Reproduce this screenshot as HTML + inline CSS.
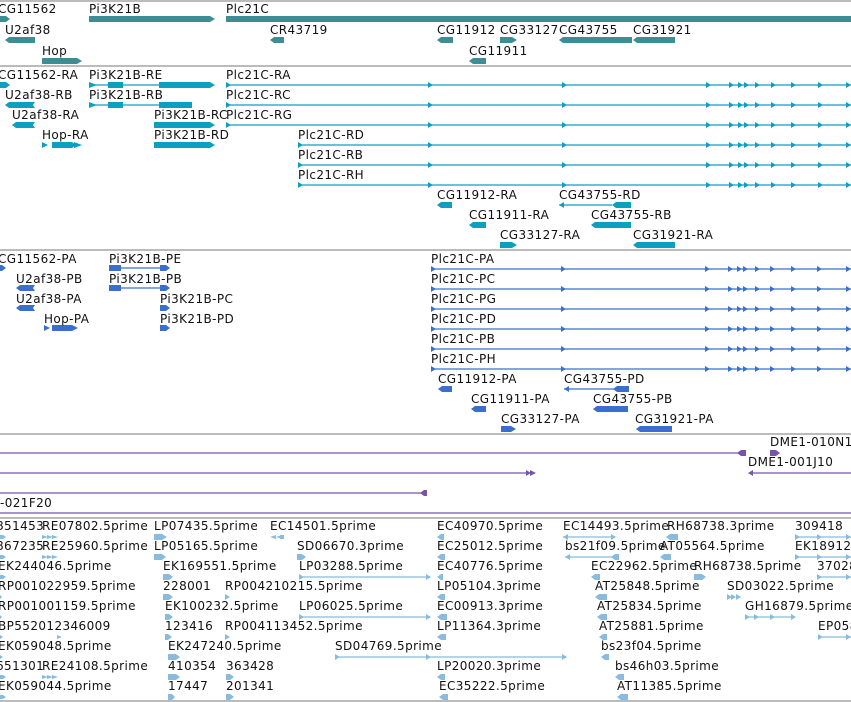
<!DOCTYPE html>
<html><head><meta charset="utf-8"><style>
html,body{margin:0;padding:0;background:#fff;width:851px;height:702px;overflow:hidden}
svg{display:block}
text{font-family:"DejaVu Sans","Liberation Sans",sans-serif;font-size:12px;letter-spacing:0.4px;fill:#111}
</style></head><body>
<svg width="851" height="702" viewBox="0 0 851 702" xmlns="http://www.w3.org/2000/svg">
<g stroke="#bbb" stroke-width="2">
<line x1="0" y1="1" x2="851" y2="1"/><line x1="0" y1="66" x2="851" y2="66"/>
<line x1="0" y1="250" x2="851" y2="250"/><line x1="0" y1="434" x2="851" y2="434"/>
<line x1="0" y1="518" x2="851" y2="518"/><line x1="0" y1="701" x2="851" y2="701"/>
</g>
<!-- Track 1 -->
<g fill="#3d8e94">
<polygon points="0,16 6,16 10,19 6,22 0,22"/>
<polygon points="89,16 210,16 215,19 210,22 89,22"/>
<rect x="226" y="16" width="625" height="6"/>
<polygon points="9,37 35,37 35,43 9,43 5,40"/>
<polygon points="42,58 77,58 82,61 77,64 42,64"/>
<polygon points="274,37 284,37 284,43 274,43 270,40"/>
<polygon points="441,37 453,37 453,43 441,43 437,40"/>
<polygon points="500,37 512,37 517,40 512,43 500,43"/>
<polygon points="563,37 632,37 632,43 563,43 559,40"/>
<polygon points="637,37 675,37 675,43 637,43 633,40"/>
<polygon points="473,58 486,58 486,64 473,64 469,61"/>
</g>
<text x="-2" y="13">CG11562</text><text x="89" y="13">Pi3K21B</text><text x="226" y="13">Plc21C</text>
<text x="5" y="34">U2af38</text><text x="270" y="34">CR43719</text><text x="437" y="34">CG11912</text>
<text x="500" y="34">CG33127</text><text x="559" y="34">CG43755</text><text x="633" y="34">CG31921</text>
<text x="42" y="55">Hop</text><text x="469" y="55">CG11911</text>
<!-- Track 2 -->
<g fill="#0aa0c0" stroke="none">
<polygon points="0,82 6,82 10,85 6,88 0,88"/>
<polygon points="9,102 35,102 33,105 35,108 9,108 5,105"/>
<polygon points="16,122 35,122 33,125 35,128 16,128 12,125"/>
<polygon points="42,142 48,145 42,148"/><rect x="52" y="142" width="20" height="6"/><polygon points="72,142 76,145 72,148"/><polygon points="74,142 82,145 74,148"/>
<polygon points="89,82 97,85 89,88"/><rect x="108" y="82" width="15" height="6"/><rect x="159" y="82" width="51" height="6"/><polygon points="210,82 215,85 210,88"/>
<polygon points="89,102 97,105 89,108"/><rect x="108" y="102" width="15" height="6"/><rect x="159" y="102" width="33" height="6"/>
<rect x="154" y="122" width="56" height="6"/><polygon points="210,122 215,125 210,128"/>
<rect x="154" y="142" width="56" height="6"/><polygon points="210,142 215,145 210,148"/>
<polygon points="441,202 452,202 452,208 441,208 437,205"/>
<polygon points="473,222 486,222 486,228 473,228 469,225"/>
<polygon points="500,242 512,242 517,245 512,248 500,248"/>
<polygon points="616,202 631,202 631,208 616,208 612,205"/>
<polygon points="595,222 631,222 631,228 595,228 591,225"/>
<polygon points="637,242 675,242 675,248 637,248 633,245"/>
<polygon points="559,205 564,202 564,208"/>
<polygon points="226,82 231,85 226,88"/><polygon points="226,102 231,105 226,108"/><polygon points="226,122 231,125 226,128"/>
<polygon points="298,142 303,145 298,148"/><polygon points="298,162 303,165 298,168"/><polygon points="298,182 303,185 298,188"/>
</g>
<g stroke="#0aa0c0" stroke-width="1.3">
<line x1="89" y1="85" x2="210" y2="85"/><line x1="89" y1="105" x2="190" y2="105"/>
<line x1="226" y1="85" x2="851" y2="85"/><line x1="226" y1="105" x2="851" y2="105"/><line x1="226" y1="125" x2="851" y2="125"/>
<line x1="298" y1="145" x2="851" y2="145"/><line x1="298" y1="165" x2="851" y2="165"/><line x1="298" y1="185" x2="851" y2="185"/>
<line x1="559" y1="205" x2="612" y2="205"/>
</g>
<g fill="#0aa0c0">
<g id="ar2">
<polygon points="428,82 433,85 428,88"/><polygon points="562,82 567,85 562,88"/><polygon points="706,82 711,85 706,88"/><polygon points="729,82 734,85 729,88"/><polygon points="738,82 743,85 738,88"/><polygon points="744,82 749,85 744,88"/><polygon points="755,82 760,85 755,88"/><polygon points="771,82 776,85 771,88"/><polygon points="791,82 796,85 791,88"/><polygon points="818,82 823,85 818,88"/><polygon points="846,82 851,85 846,88"/>
</g>
<use href="#ar2" y="20"/><use href="#ar2" y="40"/><use href="#ar2" y="60"/><use href="#ar2" y="80"/><use href="#ar2" y="100"/>
</g>
<text x="-2" y="79">CG11562-RA</text><text x="89" y="79">Pi3K21B-RE</text><text x="226" y="79">Plc21C-RA</text>
<text x="5" y="99">U2af38-RB</text><text x="89" y="99">Pi3K21B-RB</text><text x="226" y="99">Plc21C-RC</text>
<text x="12" y="119">U2af38-RA</text><text x="154" y="119">Pi3K21B-RC</text><text x="226" y="119">Plc21C-RG</text>
<text x="42" y="139">Hop-RA</text><text x="154" y="139">Pi3K21B-RD</text><text x="298" y="139">Plc21C-RD</text>
<text x="298" y="159">Plc21C-RB</text><text x="298" y="179">Plc21C-RH</text>
<text x="437" y="199">CG11912-RA</text><text x="559" y="199">CG43755-RD</text>
<text x="469" y="219">CG11911-RA</text><text x="591" y="219">CG43755-RB</text>
<text x="500" y="239">CG33127-RA</text><text x="633" y="239">CG31921-RA</text>
<!-- Track 3 -->
<g fill="#3a6fd0">
<polygon points="0,265 2,265 6,268 2,271 0,271"/>
<polygon points="20,285 35,285 33,288 35,291 20,291 16,288"/>
<polygon points="20,305 35,305 33,308 35,311 20,311 16,308"/>
<polygon points="44,325 50,328 44,331"/><rect x="52" y="325" width="20" height="6"/><polygon points="72,325 78,328 72,331"/>
<rect x="109" y="265" width="12" height="6"/><polygon points="160,265 166,265 170,268 166,271 160,271"/>
<rect x="109" y="285" width="12" height="6"/><polygon points="160,285 166,285 170,288 166,291 160,291"/>
<polygon points="160,305 166,305 170,308 166,311 160,311"/>
<polygon points="160,325 166,325 170,328 166,331 160,331"/>
<polygon points="442,386 452,386 452,392 442,392 438,389"/>
<polygon points="475,406 486,406 486,412 475,412 471,409"/>
<polygon points="501,426 511,426 516,429 511,432 501,432"/>
<polygon points="617,386 629,386 629,392 617,392 613,389"/>
<polygon points="597,406 628,406 628,412 597,412 593,409"/>
<polygon points="640,426 672,426 672,432 640,432 636,429"/>
<polygon points="564,389 569,386 569,392"/>
</g>
<g stroke="#3a6fd0" stroke-width="1.3">
<line x1="109" y1="268" x2="165" y2="268"/><line x1="109" y1="288" x2="165" y2="288"/>
<line x1="431" y1="269" x2="851" y2="269"/><line x1="431" y1="289" x2="851" y2="289"/><line x1="431" y1="309" x2="851" y2="309"/>
<line x1="431" y1="329" x2="851" y2="329"/><line x1="431" y1="349" x2="851" y2="349"/><line x1="431" y1="369" x2="851" y2="369"/>
<line x1="564" y1="389" x2="615" y2="389"/>
</g>
<g fill="#3a6fd0">
<g id="ar3">
<polygon points="431,266 436,269 431,272"/><polygon points="561,266 566,269 561,272"/><polygon points="705,266 710,269 705,272"/><polygon points="728,266 733,269 728,272"/><polygon points="737,266 742,269 737,272"/><polygon points="743,266 748,269 743,272"/><polygon points="755,266 760,269 755,272"/><polygon points="770,266 775,269 770,272"/><polygon points="791,266 796,269 791,272"/><polygon points="817,266 822,269 817,272"/><polygon points="846,266 851,269 846,272"/>
</g>
<use href="#ar3" y="20"/><use href="#ar3" y="40"/><use href="#ar3" y="60"/><use href="#ar3" y="80"/><use href="#ar3" y="100"/>
</g>
<text x="-2" y="263">CG11562-PA</text><text x="109" y="263">Pi3K21B-PE</text><text x="431" y="263">Plc21C-PA</text>
<text x="16" y="283">U2af38-PB</text><text x="109" y="283">Pi3K21B-PB</text><text x="431" y="283">Plc21C-PC</text>
<text x="16" y="303">U2af38-PA</text><text x="160" y="303">Pi3K21B-PC</text><text x="431" y="303">Plc21C-PG</text>
<text x="44" y="323">Hop-PA</text><text x="160" y="323">Pi3K21B-PD</text><text x="431" y="323">Plc21C-PD</text>
<text x="431" y="343">Plc21C-PB</text><text x="431" y="363">Plc21C-PH</text>
<text x="438" y="383">CG11912-PA</text><text x="564" y="383">CG43755-PD</text>
<text x="471" y="403">CG11911-PA</text><text x="593" y="403">CG43755-PB</text>
<text x="501" y="423">CG33127-PA</text><text x="635" y="423">CG31921-PA</text>
<!-- Track 4 -->
<g stroke="#7755aa" stroke-width="1.3">
<line x1="0" y1="453" x2="740" y2="453"/><line x1="0" y1="473" x2="532" y2="473"/>
<line x1="750" y1="473" x2="851" y2="473"/><line x1="0" y1="493" x2="424" y2="493"/>
<line x1="0" y1="513" x2="851" y2="513"/>
</g>
<g fill="#7755aa">
<polygon points="741,450 746,450 746,456 741,456 737,453"/>
<polygon points="770,450 776,450 780,453 776,456 770,456"/>
<polygon points="748,473 753,470 753,476"/>
<polygon points="526,470 531,473 526,476"/><polygon points="530,470 536,473 530,476"/>
<polygon points="424,490 427,490 427,496 424,496 420,493"/>
</g>
<text x="770" y="446">DME1-010N1</text><text x="748" y="466">DME1-001J10</text>
<text x="0" y="507">-021F20</text>
<!-- Track 5 -->
<g fill="#88bbdd">
<polygon points="0,535 3,535 6,537 3,539 0,539"/>
<polygon points="42,535 48,537 42,539"/><polygon points="47,535 53,537 47,539"/><polygon points="52,535 58,537 52,539"/>
<polygon points="154,534 162,534 167,537 162,540 154,540"/>
<polygon points="276,535 270,537 276,539"/><polygon points="282,535 276,537 282,539"/><rect x="280" y="535" width="4" height="4"/>
<polygon points="441,534 444,534 444,540 441,540 437,537"/>
<polygon points="563,537 568,534 568,540"/><polygon points="611,534 616,537 611,540"/>
<polygon points="670,534 678,534 678,540 670,540 666,537"/>
<polygon points="795,534 800,537 795,540"/><polygon points="817,534 822,537 817,540"/><polygon points="846,534 851,537 846,540"/>

<polygon points="0,555 3,555 6,557 3,559 0,559"/>
<polygon points="42,555 48,557 42,559"/><polygon points="47,555 53,557 47,559"/><polygon points="52,555 58,557 52,559"/>
<polygon points="154,554 162,554 166,557 162,560 154,560"/>
<polygon points="297,554 302,554 306,557 302,560 297,560"/>
<polygon points="441,554 445,554 445,560 441,560 437,557"/>
<polygon points="565,557 570,554 570,560"/><polygon points="615,554 619,554 619,560 615,560 611,557"/>
<polygon points="664,554 671,554 671,560 664,560 660,557"/>
<polygon points="795,554 800,557 795,560"/><polygon points="817,554 822,557 817,560"/><polygon points="846,554 851,557 846,560"/>

<polygon points="0,575 3,575 6,577 3,579 0,579"/>
<polygon points="163,574 169,574 173,577 169,580 163,580"/>
<polygon points="299,574 304,577 299,580"/><polygon points="426,574 431,577 426,580"/>
<polygon points="441,574 443,574 443,580 441,580 437,577"/>
<polygon points="595,574 600,574 600,580 595,580 591,577"/>
<polygon points="694,574 702,574 706,577 702,580 694,580"/>
<polygon points="817,574 822,577 817,580"/><polygon points="846,574 851,577 846,580"/>

<polygon points="0,595 2,597 0,599"/>
<polygon points="163,594 169,594 173,597 169,600 163,600"/>
<polygon points="225,594 230,597 225,600"/>
<polygon points="441,594 445,594 445,600 441,600 437,597"/>
<polygon points="599,594 607,594 607,600 599,600 595,597"/>
<polygon points="727,594 732,597 727,600"/><polygon points="731,594 736,597 731,600"/><polygon points="736,594 741,597 736,600"/>

<polygon points="0,615 2,617 0,619"/>
<polygon points="165,614 169,614 173,617 169,620 165,620"/>
<polygon points="299,614 304,617 299,620"/><polygon points="426,614 431,617 426,620"/>
<polygon points="441,614 447,614 447,620 441,620 437,617"/>
<polygon points="601,614 607,614 607,620 601,620 597,617"/>
<polygon points="745,614 750,617 745,620"/><polygon points="754,614 759,617 754,620"/><polygon points="770,614 775,617 770,620"/><polygon points="791,614 796,617 791,620"/>

<polygon points="0,635 3,637 0,639"/><polygon points="57,635 62,637 57,639"/>
<polygon points="165,634 168,634 172,637 168,640 165,640"/>
<polygon points="225,634 230,637 225,640"/>
<polygon points="441,634 446,634 446,640 441,640 437,637"/>
<polygon points="603,634 607,634 607,640 603,640 599,637"/>
<polygon points="818,634 823,637 818,640"/><polygon points="846,634 851,637 846,640"/>

<polygon points="0,655 3,657 0,659"/>
<polygon points="168,654 176,654 180,657 176,660 168,660"/>
<polygon points="335,654 340,657 335,660"/><polygon points="426,654 431,657 426,660"/><polygon points="562,654 567,657 562,660"/>
<polygon points="605,654 609,654 609,660 605,660 601,657"/>

<polygon points="0,675 3,675 6,677 3,679 0,679"/>
<polygon points="42,675 48,677 42,679"/><polygon points="47,675 53,677 47,679"/><polygon points="52,675 58,677 52,679"/>
<polygon points="168,674 176,674 180,677 176,680 168,680"/>
<polygon points="226,674 230,674 234,677 230,680 226,680"/>
<polygon points="441,674 445,674 445,680 441,680 437,677"/>
<polygon points="619,674 624,674 624,680 619,680 615,677"/>

<polygon points="0,695 3,695 6,697 3,699 0,699"/>
<polygon points="168,694 172,694 175,697 172,700 168,700"/>
<polygon points="226,694 230,694 234,697 230,700 226,700"/>
<polygon points="443,694 448,694 448,700 443,700 439,697"/>
<polygon points="621,694 628,694 628,700 621,700 617,697"/>
</g>
<g stroke="#88bbdd" stroke-width="1.2">
<line x1="563" y1="537" x2="615" y2="537"/><line x1="795" y1="537" x2="851" y2="537"/>
<line x1="565" y1="557" x2="615" y2="557"/><line x1="795" y1="557" x2="851" y2="557"/>
<line x1="299" y1="577" x2="430" y2="577"/><line x1="817" y1="577" x2="851" y2="577"/>
<line x1="299" y1="617" x2="430" y2="617"/><line x1="745" y1="617" x2="795" y2="617"/>
<line x1="818" y1="637" x2="851" y2="637"/>
<line x1="335" y1="657" x2="566" y2="657"/>
</g>
<text x="-4" y="530">851453</text><text x="42" y="530">RE07802.5prime</text><text x="154" y="530">LP07435.5prime</text><text x="270" y="530">EC14501.5prime</text><text x="437" y="530">EC40970.5prime</text><text x="563" y="530">EC14493.5prime</text><text x="667" y="530">RH68738.3prime</text><text x="795" y="530">309418</text>
<text x="-4" y="550">867235</text><text x="42" y="550">RE25960.5prime</text><text x="154" y="550">LP05165.5prime</text><text x="297" y="550">SD06670.3prime</text><text x="437" y="550">EC25012.5prime</text><text x="565" y="550">bs21f09.5prime</text><text x="660" y="550">AT05564.5prime</text><text x="795" y="550">EK18912</text>
<text x="-2" y="570">EK244046.5prime</text><text x="163" y="570">EK169551.5prime</text><text x="299" y="570">LP03288.5prime</text><text x="437" y="570">EC40776.5prime</text><text x="591" y="570">EC22962.5prime</text><text x="694" y="570">RH68738.5prime</text><text x="817" y="570">37028</text>
<text x="-2" y="590">RP001022959.5prime</text><text x="163" y="590">228001</text><text x="225" y="590">RP004210215.5prime</text><text x="437" y="590">LP05104.3prime</text><text x="595" y="590">AT25848.5prime</text><text x="727" y="590">SD03022.5prime</text>
<text x="-2" y="610">RP001001159.5prime</text><text x="165" y="610">EK100232.5prime</text><text x="299" y="610">LP06025.5prime</text><text x="437" y="610">EC00913.3prime</text><text x="597" y="610">AT25834.5prime</text><text x="745" y="610">GH16879.5prime</text>
<text x="-2" y="630">BP552012346009</text><text x="165" y="630">123416</text><text x="225" y="630">RP004113452.5prime</text><text x="437" y="630">LP11364.3prime</text><text x="599" y="630">AT25881.5prime</text><text x="818" y="630">EP058</text>
<text x="-2" y="650">EK059048.5prime</text><text x="168" y="650">EK247240.5prime</text><text x="335" y="650">SD04769.5prime</text><text x="601" y="650">bs23f04.5prime</text>
<text x="-4" y="670">651301</text><text x="42" y="670">RE24108.5prime</text><text x="168" y="670">410354</text><text x="226" y="670">363428</text><text x="437" y="670">LP20020.3prime</text><text x="615" y="670">bs46h03.5prime</text>
<text x="-2" y="690">EK059044.5prime</text><text x="168" y="690">17447</text><text x="226" y="690">201341</text><text x="439" y="690">EC35222.5prime</text><text x="617" y="690">AT11385.5prime</text>
</svg>
</body></html>
